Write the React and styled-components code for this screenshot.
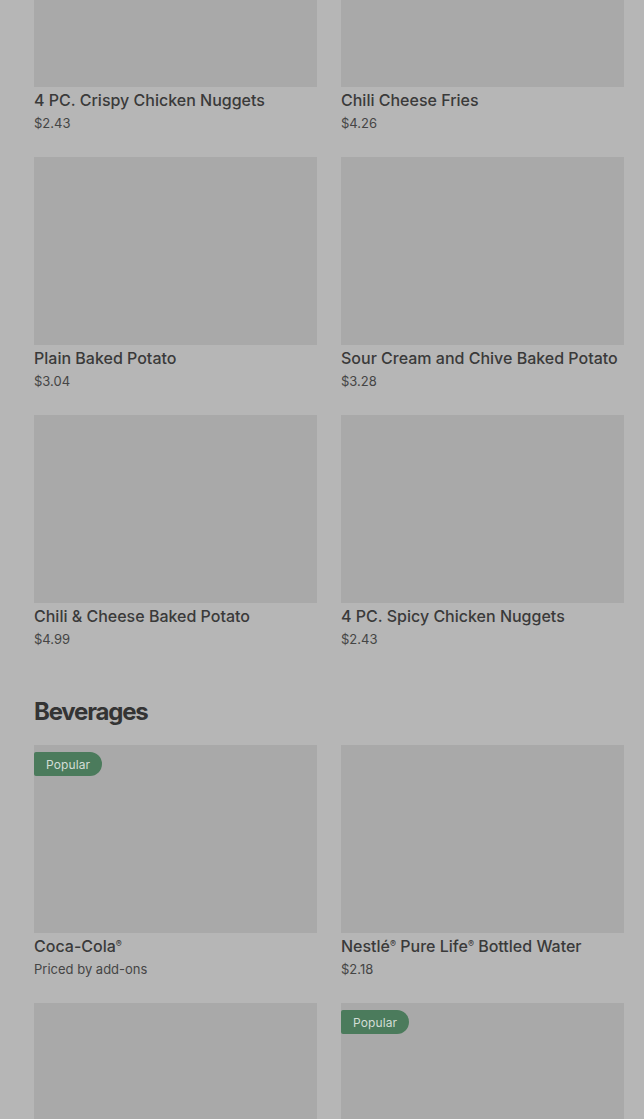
import React from "react";
import styled, { createGlobalStyle } from "styled-components";

const GlobalStyle = createGlobalStyle`
  html, body {
    margin: 0;
    padding: 0;
    background: #b6b6b6;
    overflow: hidden;
  }
  body {
    font-family: Inter, Roboto, "Liberation Sans", sans-serif;
    color: #3a3a3a;
  }
`;

const Page = styled.div`
  padding: 0 20px 0 34px;
  margin-top: -101px;
  height: 1220px;
  overflow: hidden;
`;

const Section = styled.section`
  margin-bottom: 48px;
`;

const Heading = styled.h2`
  margin: 0 0 17px;
  font-size: 24px;
  line-height: 32px;
  font-weight: 700;
  letter-spacing: -1.2px;
  color: #343434;
`;

const Grid = styled.div`
  display: grid;
  grid-template-columns: repeat(2, 283px);
  column-gap: 24px;
  row-gap: 25px;
`;

const Card = styled.div`
  display: flex;
  flex-direction: column;
`;

const Thumb = styled.div`
  position: relative;
  height: 188px;
  background: #a9a9a9;
`;

const Badge = styled.span`
  position: absolute;
  top: 7px;
  left: 0;
  height: 24px;
  padding: 0 12px 0 12px;
  display: flex;
  align-items: center;
  background: #4b7b5c;
  color: #d3ddd6;
  font-size: 12px;
  letter-spacing: 0.1px;
  border-radius: 2px 12px 12px 2px;
`;

const Title = styled.div`
  margin-top: 3px;
  height: 20px;
  font-size: 16px;
  line-height: 20px;
  font-weight: 500;
  color: #3a3a3a;
  white-space: nowrap;
`;

const Mark = styled.span`
  position: relative;
  top: -5px;
  font-size: 9px;
  line-height: 0;
`;

const Price = styled.div`
  margin-top: 4px;
  font-size: 13px;
  line-height: 18px;
  color: #454545;
`;

const sides = [
  { name: "4 PC. Crispy Chicken Nuggets", price: "$2.43" },
  { name: "Chili Cheese Fries", price: "$4.26" },
  { name: "Plain Baked Potato", price: "$3.04" },
  { name: "Sour Cream and Chive Baked Potato", price: "$3.28" },
  { name: "Chili & Cheese Baked Potato", price: "$4.99" },
  { name: "4 PC. Spicy Chicken Nuggets", price: "$2.43" },
];

const beverages = [
  { name: "Coca-Cola®", price: "Priced by add-ons", popular: true },
  { name: "Nestlé® Pure Life® Bottled Water", price: "$2.18" },
  { name: "", price: "" },
  { name: "", price: "", popular: true },
];

function renderName(name) {
  return name.split("®").map((part, i, all) => (
    <React.Fragment key={i}>
      {part}
      {i < all.length - 1 && <Mark>®</Mark>}
    </React.Fragment>
  ));
}

function Item({ name, price, popular }) {
  return (
    <Card>
      <Thumb>{popular && <Badge>Popular</Badge>}</Thumb>
      {name && <Title>{renderName(name)}</Title>}
      {price && <Price>{price}</Price>}
    </Card>
  );
}

export default function App() {
  return (
    <>
      <GlobalStyle />
      <Page>
        <Section>
          <Grid>
            {sides.map((item, i) => (
              <Item key={i} {...item} />
            ))}
          </Grid>
        </Section>
        <Section>
          <Heading>Beverages</Heading>
          <Grid>
            {beverages.map((item, i) => (
              <Item key={i} {...item} />
            ))}
          </Grid>
        </Section>
      </Page>
    </>
  );
}
